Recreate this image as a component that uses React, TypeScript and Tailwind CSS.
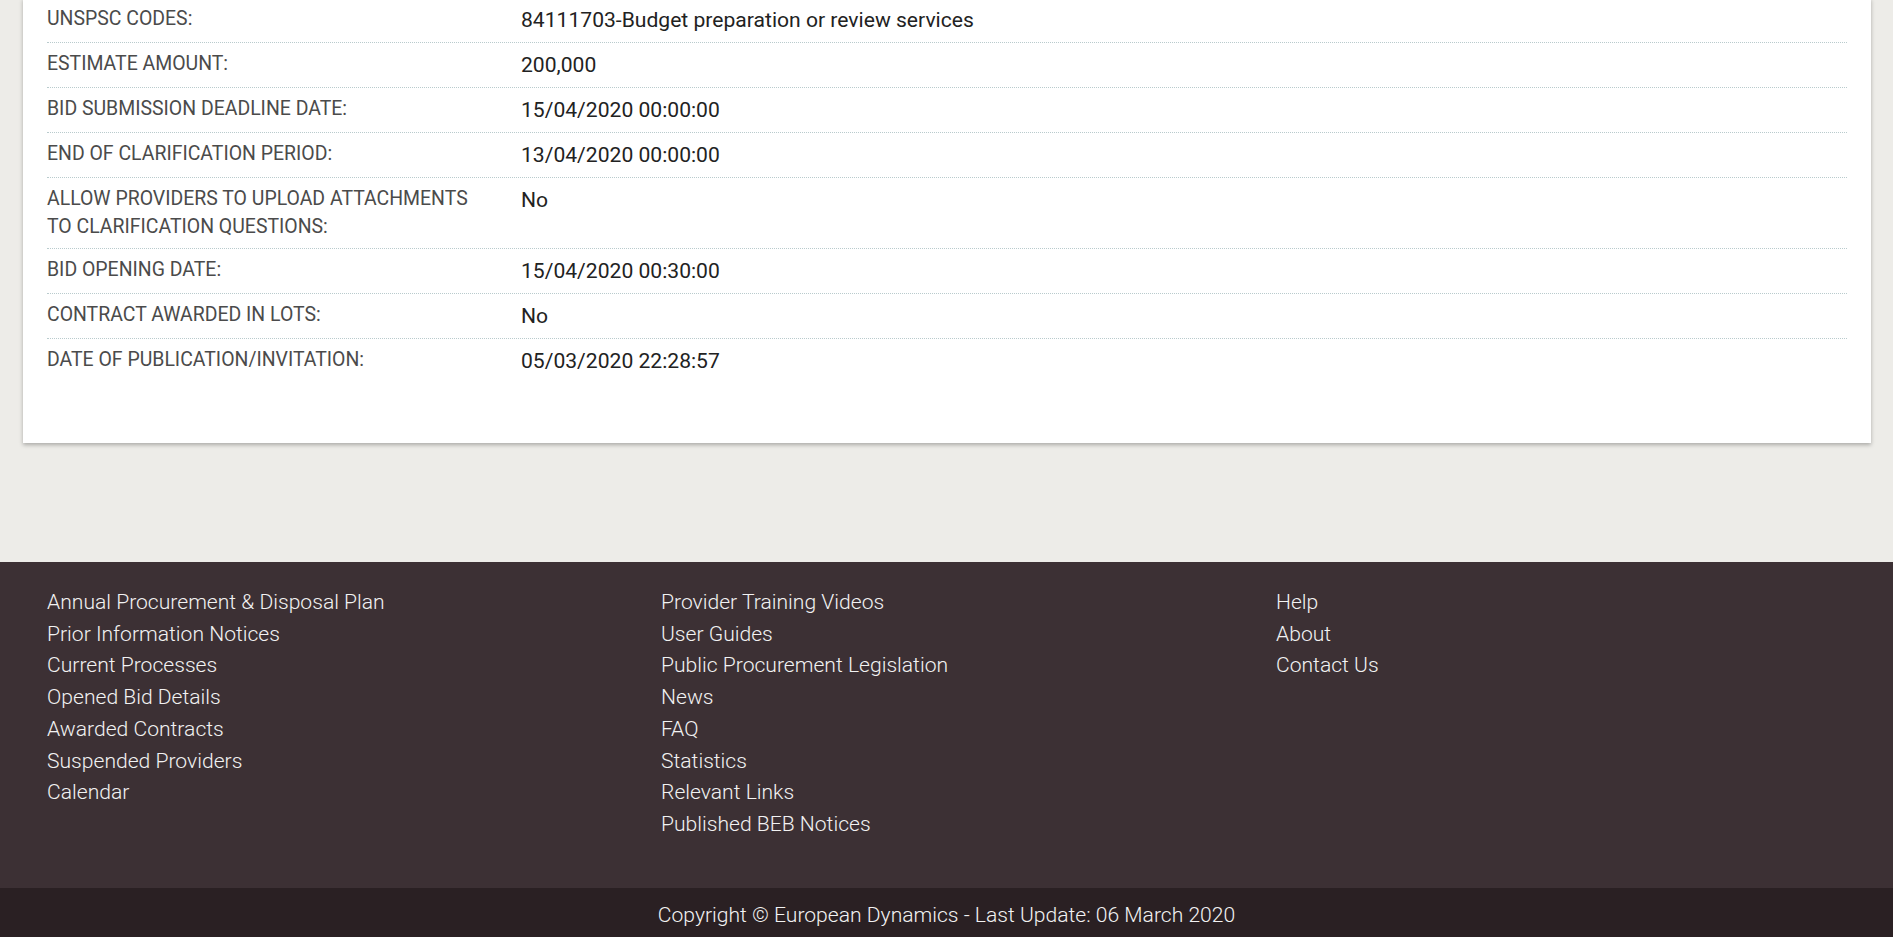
import React from "react";

const details: { label: string; value: string }[] = [
  { label: "UNSPSC Codes:", value: "84111703-Budget preparation or review services" },
  { label: "Estimate Amount:", value: "200,000" },
  { label: "Bid Submission Deadline Date:", value: "15/04/2020 00:00:00" },
  { label: "End of Clarification Period:", value: "13/04/2020 00:00:00" },
  { label: "Allow Providers to upload attachments to clarification questions:", value: "No" },
  { label: "Bid Opening Date:", value: "15/04/2020 00:30:00" },
  { label: "Contract Awarded in Lots:", value: "No" },
  { label: "Date of Publication/Invitation:", value: "05/03/2020 22:28:57" },
];

const footerCols = [
  [
    "Annual Procurement & Disposal Plan",
    "Prior Information Notices",
    "Current Processes",
    "Opened Bid Details",
    "Awarded Contracts",
    "Suspended Providers",
    "Calendar",
  ],
  [
    "Provider Training Videos",
    "User Guides",
    "Public Procurement Legislation",
    "News",
    "FAQ",
    "Statistics",
    "Relevant Links",
    "Published BEB Notices",
  ],
  ["Help", "About", "Contact Us"],
];

export default function App() {
  return (
    <div className="min-h-screen bg-[#edece8] font-['Roboto',sans-serif]">
      {/* Details card */}
      <div className="pl-[23px] pr-[22px]">
        <div className="-mt-[2px] bg-white px-[24px] pb-[60px] shadow-[0_2px_4px_rgba(0,0,0,0.28)]">
          {details.map((d, i) => (
            <div
              key={d.label}
              className={`grid grid-cols-[474px_1fr] py-[7px] ${
                i === 0 ? "" : "border-t border-dotted border-[#b9cbcd]"
              }`}
            >
              <div className="max-w-[450px] pr-4 text-[19.45px] uppercase leading-[28px] text-[#4b4b4b]">
                {d.label}
              </div>
              <div className="text-[21.1px] leading-[30px] text-[#222]">{d.value}</div>
            </div>
          ))}
        </div>
      </div>

      {/* Footer */}
      <footer className="mt-[119px] bg-[#3c3034] text-[#f2f2f2]">
        <div className="grid grid-cols-[614px_615px_1fr] pb-[48px] pl-[47px] pt-[24px]">
          {footerCols.map((col, i) => (
            <ul key={i}>
              {col.map((link) => (
                <li key={link}>
                  <a href="#" className="text-[21.1px] font-light leading-[31.7px]">
                    {link}
                  </a>
                </li>
              ))}
            </ul>
          ))}
        </div>
        <div className="bg-[#2a2023] pb-[8px] pt-[12px] text-center text-[21.1px] font-light leading-[30px]">
          Copyright © European Dynamics - Last Update: 06 March 2020
        </div>
      </footer>
    </div>
  );
}
